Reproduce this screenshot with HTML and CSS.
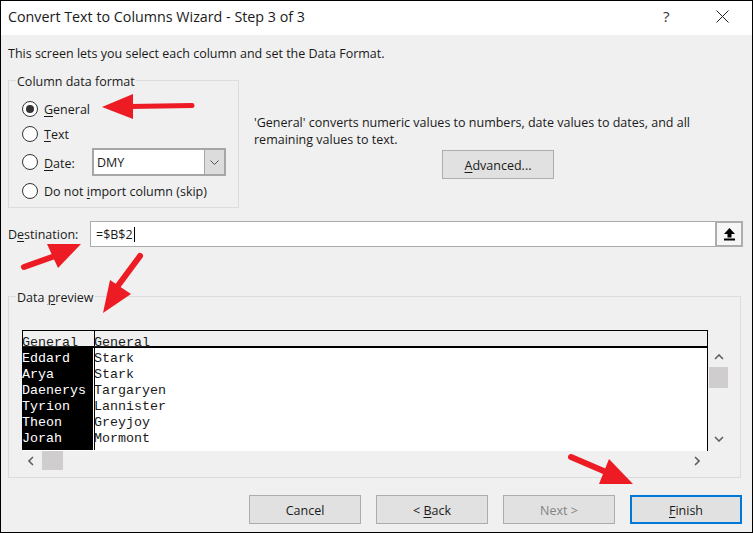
FILE: index.html
```html
<!DOCTYPE html>
<html lang="en">
<head>
<meta charset="utf-8">
<title>Convert Text to Columns Wizard</title>
<link rel="stylesheet" href="styles.css">
</head>
<body>
<div class="window">
  <header class="titlebar">
    <span class="title">Convert Text to Columns Wizard - Step 3 of 3</span>
    <span class="help">?</span>
    <svg class="close" width="13" height="13" viewBox="0 0 13 13"><path d="M.5.5l12 12M12.5.5l-12 12" stroke="#222" fill="none"/></svg>
  </header>
  <main class="content">
    <p class="intro">This screen lets you select each column and set the Data Format.</p>
    <div class="format-row">
      <fieldset class="group format">
        <legend>Column data format</legend>
        <label class="radio-row"><span class="radio checked"></span><span class="lbl"><u>G</u>eneral</span></label>
        <label class="radio-row"><span class="radio"></span><span class="lbl"><u>T</u>ext</span></label>
        <label class="radio-row date"><span class="radio"></span><span class="lbl date-label"><u>D</u>ate:</span>
          <span class="combo"><span class="combo-value">DMY</span><span class="combo-btn"><svg width="9" height="5" viewBox="0 0 9 5"><path d="M.5.5l4 4 4-4" stroke="#555" fill="none"/></svg></span></span>
        </label>
        <label class="radio-row"><span class="radio"></span><span class="lbl">Do not <u>i</u>mport column (skip)</span></label>
      </fieldset>
      <div class="side">
        <p class="note">'General' converts numeric values to numbers, date values to dates, and all remaining values to text.</p>
        <button class="btn advanced"><u>A</u>dvanced...</button>
      </div>
    </div>
    <div class="dest-row">
      <span class="dest-label">D<u>e</u>stination:</span>
      <div class="dest-input">
        <span class="dest-value">=$B$2</span><span class="caret"></span>
        <span class="upload"><svg width="11" height="13" viewBox="0 0 11 13"><path d="M5.500 0L11 6H7.500v3.500h-4V6H0z" fill="#000"/><path d="M0 11.500h11" stroke="#000" stroke-width="2"/></svg></span>
      </div>
    </div>
    <fieldset class="group preview">
      <legend>Data <u>p</u>review</legend>
      <div class="preview-grid">
        <div class="table">
          <div class="thead">
            <span class="th first"><u>General</u></span>
            <span class="th"><u>General</u></span>
          </div>
          <div class="tbody">
            <div class="col selected">
              <span>Eddard</span><span>Arya</span><span>Daenerys</span><span>Tyrion</span><span>Theon</span><span>Jorah</span>
            </div>
            <div class="col">
              <span>Stark</span><span>Stark</span><span>Targaryen</span><span>Lannister</span><span>Greyjoy</span><span>Mormont</span>
            </div>
          </div>
        </div>
        <div class="vscroll">
          <svg class="chev" width="10" height="6" viewBox="0 0 10 6"><path d="M1 5l4-4 4 4" stroke="#606060" stroke-width="1.600" fill="none"/></svg>
          <span class="vthumb"></span>
          <span class="spacer"></span>
          <svg class="chev" width="10" height="6" viewBox="0 0 10 6"><path d="M1 1l4 4 4-4" stroke="#606060" stroke-width="1.600" fill="none"/></svg>
        </div>
        <div class="hscroll">
          <svg class="chev" width="6" height="10" viewBox="0 0 6 10"><path d="M5 1L1 5l4 4" stroke="#606060" stroke-width="1.600" fill="none"/></svg>
          <span class="hthumb"></span>
          <span class="spacer"></span>
          <svg class="chev" width="6" height="10" viewBox="0 0 6 10"><path d="M1 1l4 4-4 4" stroke="#606060" stroke-width="1.600" fill="none"/></svg>
        </div>
      </div>
    </fieldset>
    <div class="actions">
      <button class="btn">Cancel</button>
      <button class="btn">&lt; <u>B</u>ack</button>
      <button class="btn" disabled>Next &gt;</button>
      <button class="btn primary"><u>F</u>inish</button>
    </div>
  </main>
  <svg class="arrows" width="753" height="533" viewBox="0 0 753 533">
    <g fill="#ed1c24" stroke="#ed1c24" stroke-linecap="round">
      <path d="M102 107L133 94V119Z" stroke-width="0"/>
      <path d="M130 106.500L192 105.500" stroke-width="5" fill="none"/>
      <path d="M81 244L47 244L58 268Z" stroke-width="0"/>
      <path d="M55 256L24 267" stroke-width="6" fill="none"/>
      <path d="M103 313L131 294L110 280Z" stroke-width="0"/>
      <path d="M117 287L140 256" stroke-width="6" fill="none"/>
      <path d="M633 484L599 484L609 459Z" stroke-width="0"/>
      <path d="M606 472L571 457" stroke-width="6" fill="none"/>
    </g>
  </svg>
</div>
</body>
</html>
```
FILE: styles.css
```css
* { box-sizing: border-box; }
html, body { margin: 0; padding: 0; }
body { width: 753px; height: 533px; overflow: hidden; font-family: "Open Sans", "Noto Sans", sans-serif; font-size: 12.500px; color: #1a1a1a; }
u { text-decoration-thickness: 1px; text-underline-offset: 2px; }
.window { position: relative; width: 753px; height: 533px; border: 1px solid #000; background: #f0f0f0; display: flex; flex-direction: column; }
.titlebar { height: 34px; flex: none; background: #fff; display: flex; align-items: center; padding: 0 23px 4px 7px; }
.title { font-size: 14.300px; flex: 1; }
.help { font-size: 15px; width: 53px; color: #333; }
.close { display: block; }
.content { flex: 1; display: flex; flex-direction: column; padding: 0 7px; }
.intro { margin: 9px 0 0; height: 18px; line-height: 20px; }
.group { margin: 0; border: 1px solid #dcdcdc; padding: 0; min-width: 0; }
.group legend { margin-left: -6px; padding: 0 1px; line-height: 21px; height: 18px; }
.format-row { display: flex; margin-top: 9px; height: 137px; }
.format { width: 231px; height: 137px; padding: 11px 0 0 13px; display: block; }
.radio-row { display: flex; align-items: center; height: 17px; margin-bottom: 8px; gap: 6px; }
.radio-row.date { height: 28px; margin-top: -2px; margin-bottom: 6px; }
.lbl { padding-top: 2px; }
.radio { width: 16px; height: 16px; border: 1px solid #333; border-radius: 50%; background: #fff; flex: none; position: relative; }
.radio.checked::after { content: ""; position: absolute; left: 3px; top: 3px; width: 8px; height: 8px; border-radius: 50%; background: #333; }
.date-label { width: 42px; flex: none; }
.combo { width: 134px; height: 28px; border: 2px solid #a6a6a6; display: flex; background: #fff; flex: none; }
.combo-value { flex: 1; padding-left: 3px; line-height: 26px; }
.combo-btn { width: 20px; background: #dcdcdc; border-left: 1px solid #a6a6a6; display: flex; align-items: center; justify-content: center; }
.side { flex: 1; padding: 43px 0 0 15px; display: flex; flex-direction: column; }
.note { margin: 0; line-height: 17px; width: 470px; }
.btn { width: 112px; height: 29px; padding: 2px 0 0; border: 1px solid #adadad; background: #e1e1e1; font: inherit; color: #1a1a1a; }
.btn[disabled] { color: #838383; }
.btn.primary { border: 2px solid #0078d7; }
.advanced { margin: 2px 0 0 188px; }
.dest-row { display: flex; align-items: center; margin-top: 13px; height: 26px; }
.dest-label { width: 82px; flex: none; }
.dest-input { flex: 1; height: 26px; margin-right: 2px; background: #fff; border: 1px solid #ababab; display: flex; align-items: center; padding-left: 5px; }
.dest-value { font-size: 12.500px; }
.caret { width: 1px; height: 15px; background: #000; margin-left: 1px; }
.spacer { flex: 1; }
.upload { margin-left: auto; width: 28px; height: 26px; margin-top: -1px; margin-bottom: -1px; margin-right: -1px; border: 2px solid #adadad; background: #f6f6f6; display: flex; align-items: center; justify-content: center; }
.preview { margin-top: 40px; height: 191px; padding: 25px 0 0 13px; width: 733px; }
.preview-grid { display: grid; grid-template-columns: 686px 21px; grid-template-rows: 121px 19px; }
.table { display: flex; flex-direction: column; }
.thead { height: 18px; flex: none; display: grid; grid-template-columns: 71px 1fr; background: #f0f0f0; border: 1px solid #000; border-bottom-width: 2px; }
.th, .col span { font-family: "Liberation Mono", monospace; font-size: 13.330px; line-height: 16px; display: block; text-indent: -1px; }
.th { line-height: 23px; }
.th u { text-underline-offset: 0; }
.thead .th + .th { border-left: 1px solid #000; }
.tbody { flex: 1; display: grid; grid-template-columns: 72px 1fr; background: #fff; border-right: 1px solid #000; }
.col { border-left: 1px solid #000; padding-top: 3px; margin-bottom: 1px; }
.col.selected { background: #000; color: #fff; border-left: 0; margin-right: 1px; }
.col.selected span { text-indent: 0; }
.vscroll { display: flex; flex-direction: column; align-items: center; padding: 24px 0 9px; }
.vthumb { width: 19px; height: 21px; background: #cfcdcd; margin-top: 7px; }
.hscroll { display: flex; align-items: center; padding: 0 8px 0 6px; grid-column: 1; }
.hthumb { width: 21px; height: 19px; background: #cfcdcd; margin-left: 8px; }
.actions { display: flex; justify-content: flex-end; gap: 15px; margin-top: 17px; margin-right: 3px; }
.arrows { position: absolute; left: -1px; top: -1px; pointer-events: none; }
```
